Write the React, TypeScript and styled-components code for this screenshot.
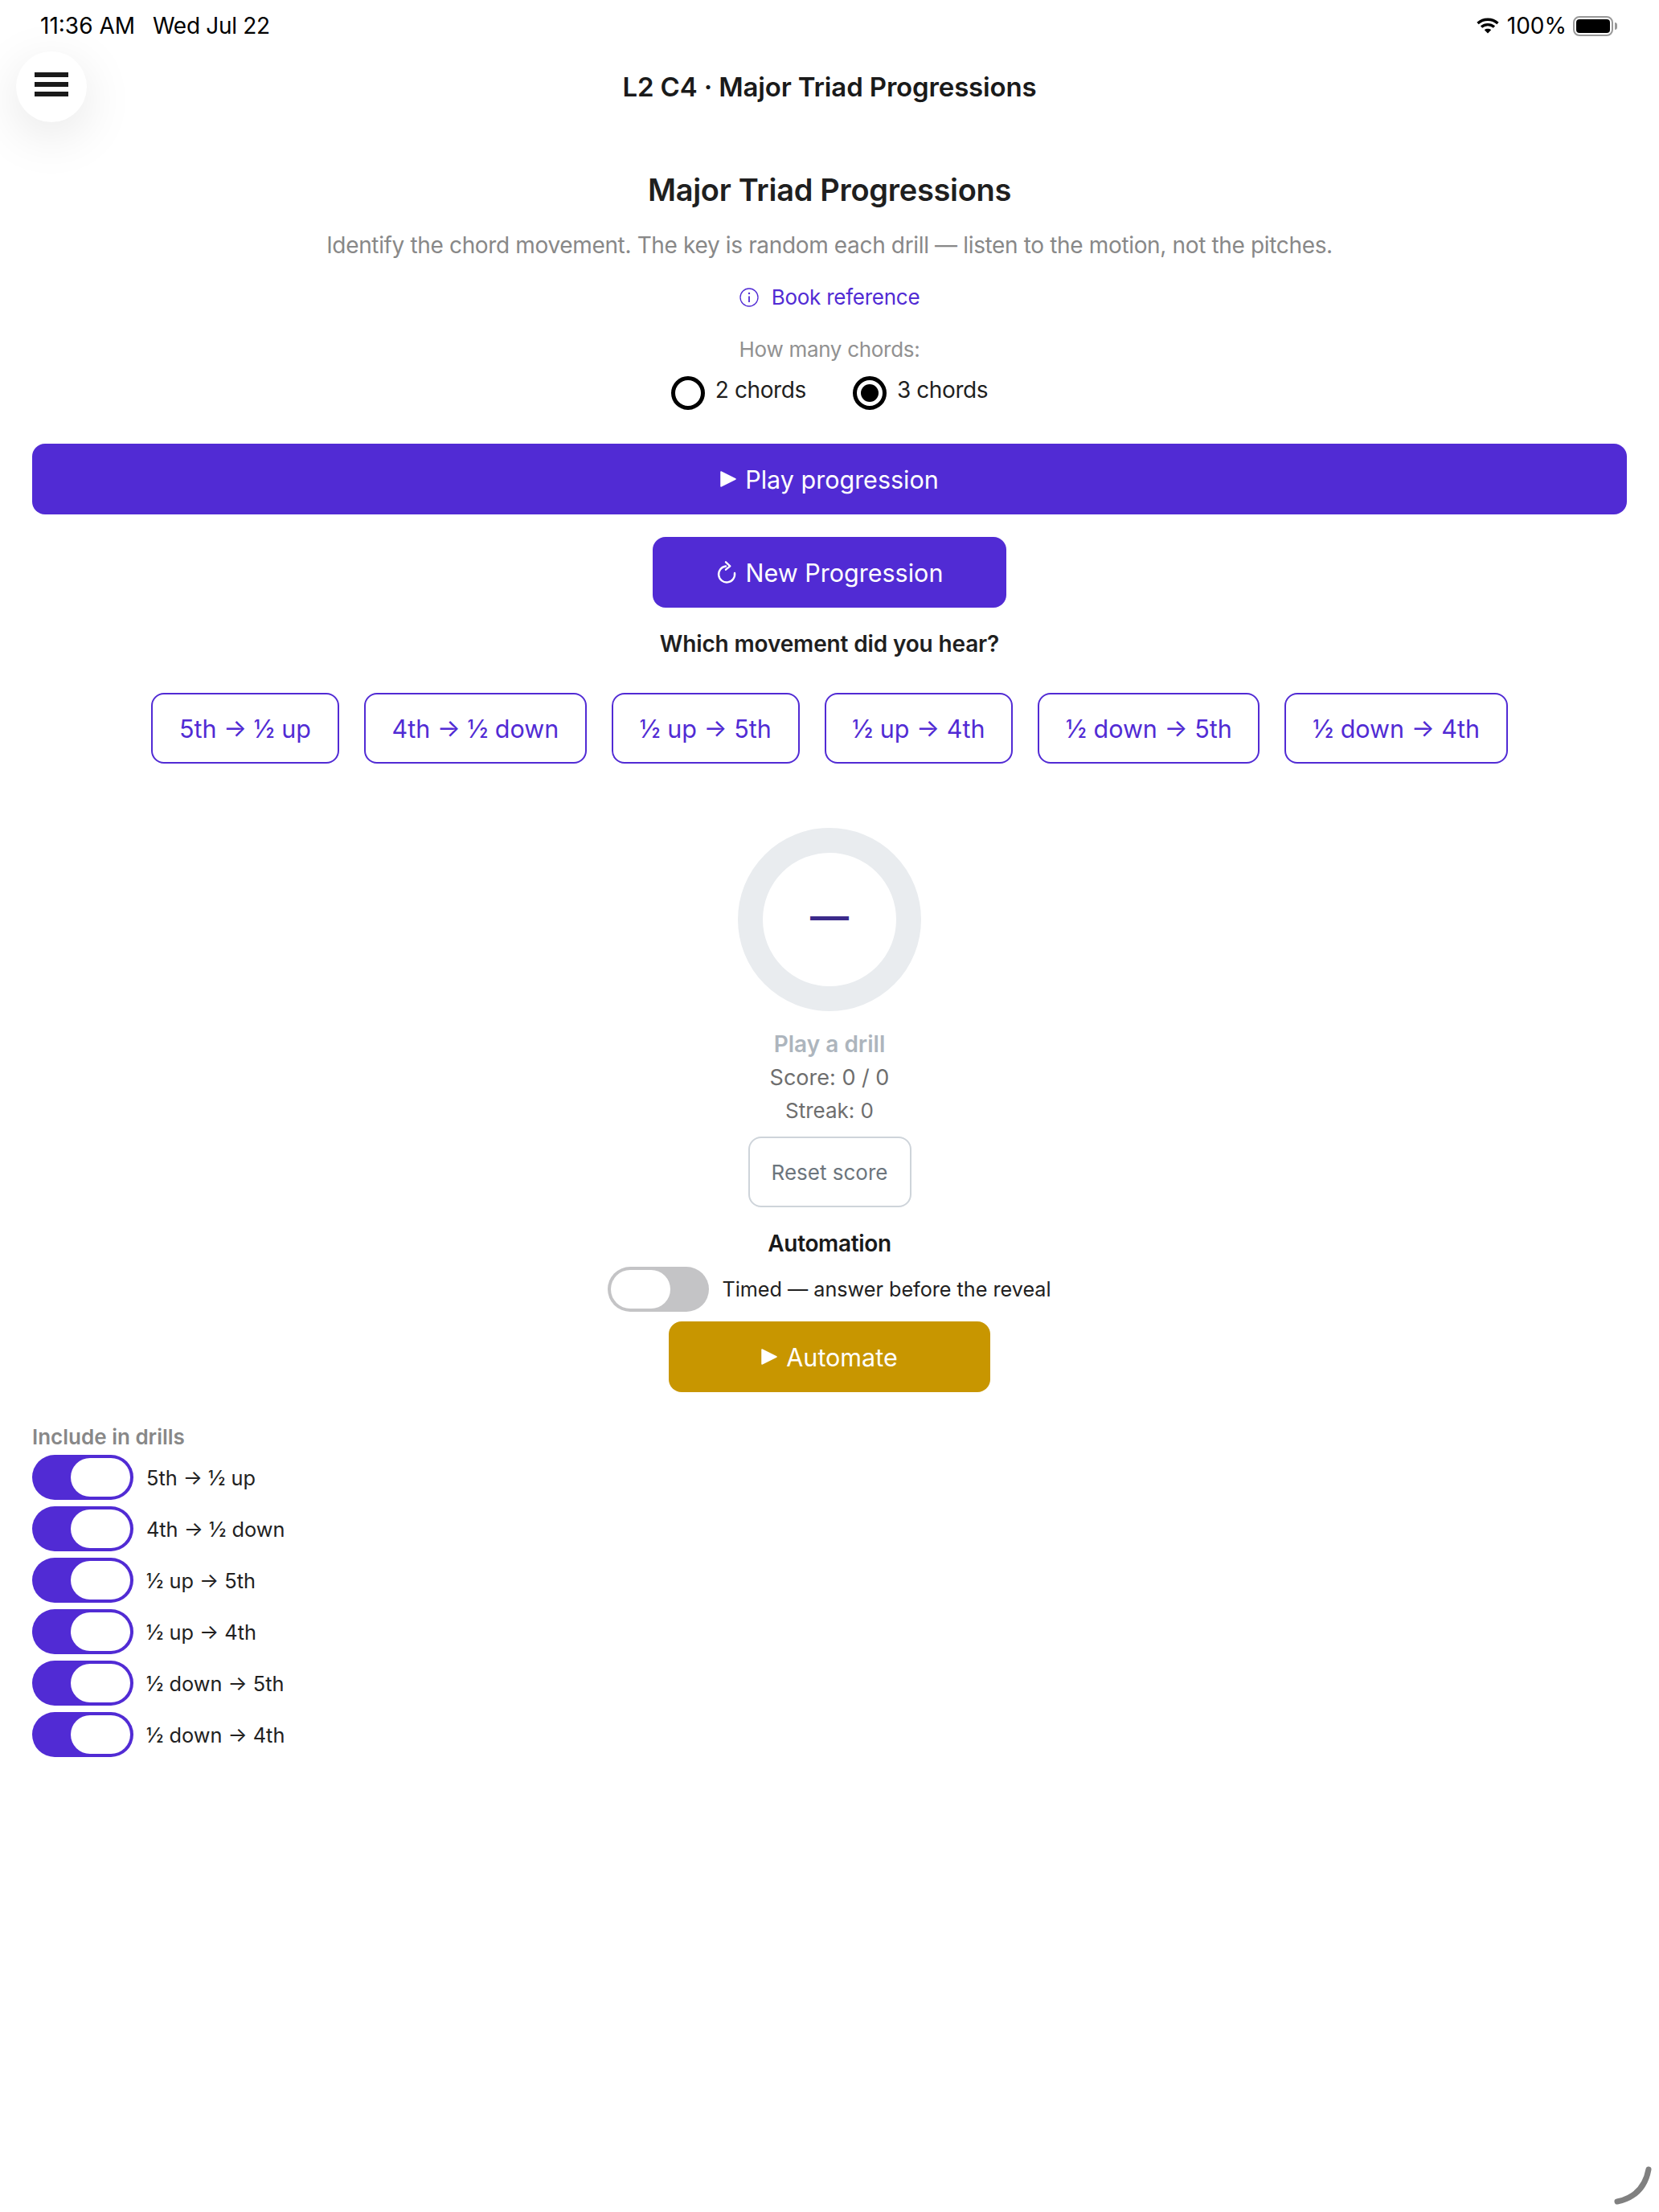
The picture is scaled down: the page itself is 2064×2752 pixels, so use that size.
import styled, { createGlobalStyle } from 'styled-components';

const PRIMARY = '#512bd4';
const movements = [
  '5th → ½ up',
  '4th → ½ down',
  '½ up → 5th',
  '½ up → 4th',
  '½ down → 5th',
  '½ down → 4th',
];

const GlobalStyle = createGlobalStyle`
  html, body {
    margin: 0;
    padding: 0;
    background: #fff;
  }
  body {
    font-family: Inter, 'Noto Sans', sans-serif;
    color: #212121;
  }
`;

const Page = styled.div`
  position: relative;
  width: 2064px;
  height: 2752px;
  overflow: hidden;
  background: #fff;
`;

const StatusBar = styled.div`
  height: 64px;
  padding: 0 52px 0 50px;
  box-sizing: border-box;
  display: flex;
  align-items: center;
  justify-content: space-between;
  color: #000;
  font-size: 28px;
`;

const StatusGroup = styled.div<{ $gap: number }>`
  display: flex;
  align-items: center;
  gap: ${({ $gap }) => $gap}px;
`;

const StatusDate = styled.span`
  letter-spacing: -0.3px;
`;

const Battery = styled.div`
  position: relative;
  width: 50px;
  height: 25px;
  margin-right: 5px;
  box-sizing: border-box;
  border: 2px solid #999;
  border-radius: 8px;
  padding: 2px;
  &::before {
    content: '';
    display: block;
    width: 100%;
    height: 100%;
    background: #000;
    border-radius: 4px;
  }
  &::after {
    content: '';
    position: absolute;
    right: -7px;
    top: 6px;
    width: 3px;
    height: 9px;
    background: #999;
    border-radius: 0 3px 3px 0;
  }
`;

const MenuButton = styled.button`
  position: absolute;
  left: 20px;
  top: 64px;
  width: 88px;
  height: 88px;
  border: none;
  padding: 0 0 6px;
  border-radius: 50%;
  background: #fff;
  box-shadow: 0 16px 64px rgba(0, 0, 0, 0.1);
  display: flex;
  flex-direction: column;
  align-items: center;
  justify-content: center;
  gap: 6px;
`;

const MenuBar = styled.span`
  display: block;
  width: 42px;
  height: 6px;
  background: #1a1a1a;
`;

const NavTitle = styled.div`
  height: 88px;
  line-height: 88px;
  text-align: center;
  font-size: 33px;
  letter-spacing: -0.15px;
  font-weight: 600;
  color: #1a1a1a;
`;

const Content = styled.main`
  display: flex;
  flex-direction: column;
  align-items: center;
  padding: 0 40px;
`;

const Heading = styled.h1`
  margin: 59px 0 0;
  font-size: 38px;
  letter-spacing: -0.3px;
  line-height: 50px;
  font-weight: 600;
  color: #1f1f1f;
`;

const Subtitle = styled.p`
  margin: 24px 0 0;
  font-size: 28px;
  letter-spacing: -0.35px;
  line-height: 40px;
  color: #888;
`;

const BookLink = styled.a`
  margin-top: 27px;
  display: flex;
  align-items: center;
  gap: 16px;
  font-size: 26px;
  letter-spacing: -0.25px;
  line-height: 36px;
  color: ${PRIMARY};
`;

const ChordsLabel = styled.div`
  margin-top: 29px;
  font-size: 26px;
  letter-spacing: -0.3px;
  line-height: 36px;
  color: #919191;
`;

const RadioRow = styled.div`
  margin-top: 15px;
  display: flex;
  gap: 58px;
`;

const RadioOption = styled.label`
  display: flex;
  align-items: flex-start;
  gap: 13px;
  height: 42px;
  font-size: 28px;
  letter-spacing: -0.4px;
  line-height: 34px;
  color: #1f1f1f;
`;

const RadioCircle = styled.span<{ $checked?: boolean }>`
  width: 42px;
  height: 42px;
  box-sizing: border-box;
  border: 5px solid #000;
  border-radius: 50%;
  display: flex;
  align-items: center;
  justify-content: center;
  &::after {
    content: '';
    display: ${({ $checked }) => ($checked ? 'block' : 'none')};
    width: 22px;
    height: 22px;
    background: #000;
    border-radius: 50%;
  }
`;

const SolidButton = styled.button<{ $color?: string; $width?: string }>`
  height: 88px;
  width: ${({ $width }) => $width ?? '100%'};
  flex-shrink: 0;
  border: none;
  border-radius: 16px;
  background: ${({ $color }) => $color ?? PRIMARY};
  color: #fff;
  font-family: inherit;
  font-size: 30.5px;
  display: flex;
  align-items: center;
  justify-content: center;
  gap: 11px;
`;

const PlayRow = styled.div`
  margin-top: 42px;
  width: 100%;
`;

const NewRow = styled.div`
  margin-top: 28px;
`;

const Question = styled.div`
  margin-top: 27px;
  margin-bottom: 1px;
  font-size: 28px;
  letter-spacing: -0.15px;
  line-height: 36px;
  font-weight: 600;
  color: #1f1f1f;
`;

const Options = styled.div`
  margin-top: 42px;
  display: flex;
  justify-content: center;
  gap: 31px;
`;

const OptionButton = styled.button`
  height: 88px;
  padding: 0 32.8px;
  box-sizing: border-box;
  border: 2px solid ${PRIMARY};
  border-radius: 16px;
  background: #fff;
  color: ${PRIMARY};
  font-family: inherit;
  font-size: 30.5px;
`;

const ScoreRing = styled.div`
  margin-top: 80px;
  width: 228px;
  height: 228px;
  box-sizing: border-box;
  border: 31px solid #e9ecef;
  padding-bottom: 10px;
  border-radius: 50%;
  display: flex;
  align-items: center;
  justify-content: center;
  font-size: 48px;
  font-weight: 600;
  color: #3b2a8a;
`;

const DrillState = styled.div`
  margin-top: 23px;
  font-size: 28px;
  line-height: 36px;
  font-weight: 600;
  color: #adb5bd;
`;

const Score = styled.div`
  margin-top: 6px;
  font-size: 27px;
  line-height: 36px;
  color: #6e6e6e;
`;

const Streak = styled.div`
  margin-top: 7px;
  font-size: 26px;
  line-height: 32px;
  color: #6e6e6e;
`;

const ResetButton = styled.button`
  margin-top: 16px;
  width: 203px;
  height: 88px;
  box-sizing: border-box;
  border: 2px solid #ced4da;
  border-radius: 16px;
  background: #fff;
  color: #6c757d;
  font-family: inherit;
  font-size: 26px;
`;

const SectionTitle = styled.div`
  margin-top: 27px;
  font-size: 28px;
  letter-spacing: -0.35px;
  line-height: 36px;
  font-weight: 600;
  color: #1a1a1a;
`;

const TimedRow = styled.div`
  margin-top: 11px;
  display: flex;
  align-items: center;
  gap: 16px;
  font-size: 25.2px;
  color: #212121;
`;

const Track = styled.span<{ $on?: boolean }>`
  width: 126px;
  height: 56px;
  flex-shrink: 0;
  box-sizing: border-box;
  padding: 4px;
  border-radius: 28px;
  background: ${({ $on }) => ($on ? PRIMARY : '#c4c4c6')};
  display: flex;
  justify-content: ${({ $on }) => ($on ? 'flex-end' : 'flex-start')};
`;

const Knob = styled.span`
  width: 74px;
  height: 48px;
  border-radius: 24px;
  background: #fff;
`;

const AutomateRow = styled.div`
  margin-top: 12px;
`;

const IncludeSection = styled.section`
  margin-top: 38px;
  padding: 0 40px;
  display: flex;
  flex-direction: column;
  gap: 8px;
`;

const IncludeTitle = styled.div`
  font-size: 26px;
  line-height: 36px;
  margin-bottom: -4px;
  font-weight: 600;
  color: #888;
`;

const IncludeRow = styled.div`
  display: flex;
  align-items: center;
  gap: 16px;
  font-size: 25.3px;
  color: #212121;
`;

const CornerArc = styled.svg`
  position: absolute;
  right: 0;
  bottom: 0;
  width: 104px;
  height: 92px;
`;

function PlayIcon() {
  return (
    <svg width="20" height="20" viewBox="0 0 20 20" fill="#fff" stroke="#fff" strokeWidth="1.5" strokeLinejoin="round">
      <path d="M1 1 L19 10 L1 19 Z" />
    </svg>
  );
}

function RefreshIcon() {
  return (
    <svg width="26" height="30" viewBox="0 0 26 30" fill="none" stroke="#fff" strokeWidth="2.4" strokeLinecap="round" strokeLinejoin="round">
      <path d="M12 7.5 A10 10 0 1 0 23 16" />
      <path d="M12 2.3 L17.3 7.3 L12 11.7" />
    </svg>
  );
}

function InfoIcon() {
  return (
    <svg width="24" height="24" viewBox="0 0 24 24" fill="none" stroke={PRIMARY} strokeWidth="1.3">
      <circle cx="12" cy="12" r="11" />
      <path d="M12 10.5 V18" strokeWidth="1.8" />
      <circle cx="12" cy="7" r="1.2" fill={PRIMARY} stroke="none" />
    </svg>
  );
}

function WifiIcon() {
  return (
    <svg width="30" height="20" viewBox="0 0 30 20" fill="none" stroke="#000" strokeWidth="3.4">
      <path d="M1.5 7 C 8.5 0.6 19.5 0.6 26.5 7" />
      <path d="M6 11.5 C 10.5 7.6 17.5 7.6 22 11.5" />
      <path d="M14 19.5 L9.8 15.2 C 12 13.4 16 13.4 18.2 15.2 Z" fill="#000" stroke="none" />
    </svg>
  );
}

export default function App() {
  return (
    <Page>
      <GlobalStyle />
      <StatusBar>
        <StatusGroup $gap={22}>
          <span>11:36 AM</span>
          <StatusDate>Wed Jul 22</StatusDate>
        </StatusGroup>
        <StatusGroup $gap={8}>
          <WifiIcon />
          <span>100%</span>
          <Battery />
        </StatusGroup>
      </StatusBar>
      <MenuButton aria-label="Menu">
        <MenuBar />
        <MenuBar />
        <MenuBar />
      </MenuButton>
      <NavTitle>L2 C4 · Major Triad Progressions</NavTitle>
      <Content>
        <Heading>Major Triad Progressions</Heading>
        <Subtitle>
          Identify the chord movement. The key is random each drill — listen to
          the motion, not the pitches.
        </Subtitle>
        <BookLink>
          <InfoIcon />
          Book reference
        </BookLink>
        <ChordsLabel>How many chords:</ChordsLabel>
        <RadioRow>
          <RadioOption>
            <RadioCircle />2 chords
          </RadioOption>
          <RadioOption>
            <RadioCircle $checked />3 chords
          </RadioOption>
        </RadioRow>
        <PlayRow>
          <SolidButton>
            <PlayIcon />
            Play progression
          </SolidButton>
        </PlayRow>
        <NewRow>
          <SolidButton $width="440px">
            <RefreshIcon />
            New Progression
          </SolidButton>
        </NewRow>
        <Question>Which movement did you hear?</Question>
        <Options>
          {movements.map((movement) => (
            <OptionButton key={movement}>{movement}</OptionButton>
          ))}
        </Options>
        <ScoreRing>—</ScoreRing>
        <DrillState>Play a drill</DrillState>
        <Score>Score: 0 / 0</Score>
        <Streak>Streak: 0</Streak>
        <ResetButton>Reset score</ResetButton>
        <SectionTitle>Automation</SectionTitle>
        <TimedRow>
          <Track>
            <Knob />
          </Track>
          Timed — answer before the reveal
        </TimedRow>
        <AutomateRow>
          <SolidButton $color="#c89600" $width="400px">
            <PlayIcon />
            Automate
          </SolidButton>
        </AutomateRow>
      </Content>
      <IncludeSection>
        <IncludeTitle>Include in drills</IncludeTitle>
        {movements.map((movement) => (
          <IncludeRow key={movement}>
            <Track $on>
              <Knob />
            </Track>
            {movement}
          </IncludeRow>
        ))}
      </IncludeSection>
      <CornerArc viewBox="0 0 104 92" fill="none" stroke="#808080" strokeWidth="7" strokeLinecap="round">
        <path d="M91 39 Q 85 72 52 79" />
      </CornerArc>
    </Page>
  );
}
